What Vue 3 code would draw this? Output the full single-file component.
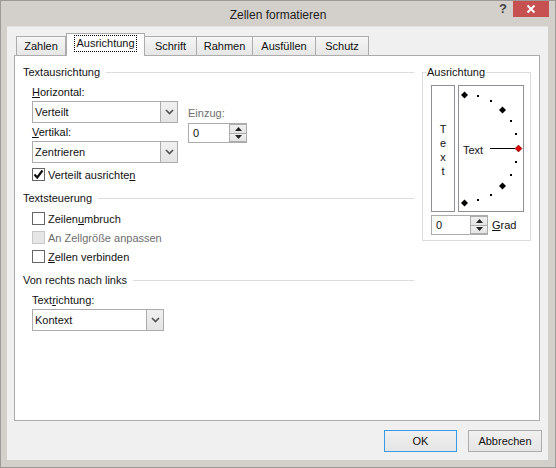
<script setup>
const tabs = [
  { name: 'Zahlen', w: 50 },
  { name: 'Ausrichtung', w: 79, active: true },
  { name: 'Schrift', w: 52 },
  { name: 'Rahmen', w: 56 },
  { name: 'Ausfüllen', w: 63 },
  { name: 'Schutz', w: 53 },
]
const big = [[464.5, 95], [502.5, 110], [502.5, 186], [464.5, 203]]
const small = [[478, 96], [491, 101], [511, 121], [516, 134], [516, 162], [511, 175], [491, 195], [478, 200]]
const diamond = (x, y, r = 3.5) => `${x},${y - r} ${x + r},${y} ${x},${y + r} ${x - r},${y}`
</script>

<template>
  <div class="window">
    <header class="titlebar">
      <span class="title">Zellen formatieren</span>
      <span class="help">?</span>
      <span class="close">
        <svg width="10" height="10" viewBox="0 0 10 10"><path d="M1.5 1.5 8.5 8.5M8.5 1.5 1.5 8.5" stroke="#fff" stroke-width="2" /></svg>
      </span>
    </header>

    <div class="client">
      <div class="tabs">
        <div
          v-for="t in tabs"
          :key="t.name"
          class="tab"
          :class="{ active: t.active }"
          :style="{ width: t.w + 'px' }"
        >
          <span :class="{ focus: t.active }">{{ t.name }}</span>
        </div>
      </div>

      <section class="panel">
        <div class="left">
          <div class="head"><span>Textausrichtung</span><i></i></div>
          <div class="align-grid">
            <div class="stack">
              <div class="label first"><u>H</u>orizontal:</div>
              <div class="select">
                <span>Verteilt</span>
                <b class="arrow"><svg width="9" height="6" viewBox="0 0 9 6"><path d="M1 1 4.5 4.5 8 1" fill="none" stroke="#555" stroke-width="1.7" /></svg></b>
              </div>
              <div class="label"><u>V</u>ertikal:</div>
              <div class="select">
                <span>Zentrieren</span>
                <b class="arrow"><svg width="9" height="6" viewBox="0 0 9 6"><path d="M1 1 4.5 4.5 8 1" fill="none" stroke="#555" stroke-width="1.7" /></svg></b>
              </div>
            </div>
            <div class="indent">
              <div class="label muted">Einzug:</div>
              <div class="spin">
                <span>0</span>
                <div class="spin-btns">
                  <b><svg width="7" height="4" viewBox="0 0 7 4"><path d="M3.5 0 7 4H0z" fill="#222" /></svg></b>
                  <b><svg width="7" height="4" viewBox="0 0 7 4"><path d="M0 0H7L3.5 4z" fill="#222" /></svg></b>
                </div>
              </div>
            </div>
          </div>
          <div class="check top-check">
            <span class="box">
              <svg width="11" height="11" viewBox="0 0 11 11"><path d="M1.5 5.5 4.2 8.5 9.5 1.5" fill="none" stroke="#111" stroke-width="2.2" /></svg>
            </span>
            <span>Verteilt ausrichte<u>n</u></span>
          </div>

          <div class="head second"><span>Textsteuerung</span><i></i></div>
          <div class="check-list">
            <div class="check"><span class="box"></span><span>Zeilen<u>u</u>mbruch</span></div>
            <div class="check disabled"><span class="box"></span><span>An Zellgröße anpassen</span></div>
            <div class="check"><span class="box"></span><span><u>Z</u>ellen verbinden</span></div>
          </div>

          <div class="head third"><span>Von rechts nach links</span><i></i></div>
          <div class="label first">Text<u>r</u>ichtung:</div>
          <div class="select narrow">
            <span>Kontext</span>
            <b class="arrow"><svg width="9" height="6" viewBox="0 0 9 6"><path d="M1 1 4.5 4.5 8 1" fill="none" stroke="#555" stroke-width="1.7" /></svg></b>
          </div>
        </div>

        <fieldset class="orient">
          <legend>Ausrichtung</legend>
          <div class="dials">
            <div class="vertical"><span>T</span><span>e</span><span>x</span><span>t</span></div>
            <svg class="dial" width="66" height="127" viewBox="458 85 66 127">
              <rect x="458.5" y="85.5" width="65" height="126" fill="#fff" stroke="#8e8f98" />
              <text x="463" y="154" class="dial-text">Text</text>
              <line x1="490" y1="148.5" x2="515" y2="148.5" stroke="#000" />
              <polygon v-for="(p, i) in big" :key="'b' + i" :points="diamond(p[0], p[1])" fill="#000" />
              <rect v-for="(p, i) in small" :key="'s' + i" :x="p[0] - 1" :y="p[1] - 1" width="2" height="2" fill="#000" />
              <polygon :points="diamond(518.5, 148.5)" fill="#e00000" stroke="#500" stroke-width="0.5" />
            </svg>
          </div>
          <div class="degree">
            <div class="spin">
              <span>0</span>
              <div class="spin-btns">
                <b><svg width="7" height="4" viewBox="0 0 7 4"><path d="M3.5 0 7 4H0z" fill="#222" /></svg></b>
                <b><svg width="7" height="4" viewBox="0 0 7 4"><path d="M0 0H7L3.5 4z" fill="#222" /></svg></b>
              </div>
            </div>
            <span><u>G</u>rad</span>
          </div>
        </fieldset>
      </section>

      <footer class="footer">
        <button class="btn default">OK</button>
        <button class="btn cancel">Abbrechen</button>
      </footer>
    </div>
  </div>
</template>

<style>
html, body { margin: 0; padding: 0; background: #d4d0cc; }
</style>

<style scoped>
.window {
  box-sizing: border-box;
  width: 556px;
  height: 468px;
  background: #d3cfcb;
  border: 1px solid #9c9a97;
  font: 11px/14px "Liberation Sans", Arial, sans-serif;
  color: #111;
  display: flex;
  flex-direction: column;
  overflow: hidden;
}
.titlebar {
  height: 25px;
  flex: none;
  display: flex;
  align-items: flex-start;
  position: relative;
}
.title {
  position: absolute;
  left: 0;
  right: 0;
  top: 6px;
  text-align: center;
  font-size: 12px;
  line-height: 16px;
  color: #222;
}
.help {
  position: absolute;
  left: 498px;
  top: 0;
  font: bold 13px/15px "Liberation Sans", sans-serif;
  color: #444;
}
.close {
  position: absolute;
  left: 512px;
  top: 0;
  width: 36px;
  height: 16px;
  background: #c75050;
  display: flex;
  align-items: center;
  justify-content: center;
}
.client {
  width: 541px;
  height: 434px;
  margin-left: 6px;
  box-sizing: border-box;
  background: #f0f0f0;
  padding: 7px 7px 0 7px;
  border-top: 1px solid #e4e2e0;
  display: flex;
  flex-direction: column;
}
.tabs {
  display: flex;
  align-items: flex-end;
  height: 21px;
  padding-left: 2px;
  position: relative;
  z-index: 1;
}
.tab {
  box-sizing: border-box;
  height: 19px;
  background: linear-gradient(#f6f6f6, #e6e6e6);
  border: 1px solid #acacac;
  border-bottom: none;
  border-left: none;
  display: flex;
  align-items: center;
  justify-content: center;
}
.tab:first-child { border-left: 1px solid #acacac; }
.tab.active {
  height: 23px;
  margin-bottom: -1px;
  background: #fff;
  border-left: 1px solid #acacac;
  padding-bottom: 3px;
}
.focus { outline: 1px dotted #000; padding: 0 1px; line-height: 15px; }
.panel {
  box-sizing: border-box;
  width: 526px;
  height: 366px;
  background: #fff;
  border: 1px solid #acacac;
  display: flex;
  padding: 9px 0 0 8px;
}
.left { width: 391px; }
.head {
  display: flex;
  align-items: center;
  gap: 6px;
  height: 14px;
}
.head i { flex: 1; height: 1px; background: #dcdcdc; }
.head.second { margin-top: 7px; }
.head.third { margin-top: 7px; }
.label { margin: 2px 0 2px 9px; height: 14px; }
.label.first { margin-top: 6px; }
.muted { color: #6d6d6d; margin: 0 0 3px; }
.align-grid { display: flex; margin-left: 0; }
.stack { width: 155px; }
.indent { margin-left: 10px; padding-top: 27px; }
.select {
  box-sizing: border-box;
  width: 146px;
  height: 22px;
  margin-left: 9px;
  background: #fff;
  border: 1px solid #acacac;
  display: flex;
  align-items: center;
  justify-content: space-between;
  padding-left: 2px;
}
.select.narrow { width: 132px; }
.arrow {
  width: 17px;
  height: 20px;
  box-sizing: border-box;
  background: linear-gradient(#f0f0f0, #e4e4e4);
  border-left: 1px solid #acacac;
  display: flex;
  align-items: center;
  justify-content: center;
}
.spin {
  box-sizing: border-box;
  width: 59px;
  height: 20px;
  background: #fff;
  border: 1px solid #acacac;
  display: flex;
  align-items: center;
  justify-content: space-between;
  padding-left: 4px;
}
.spin-btns { display: flex; flex-direction: column; width: 17px; height: 18px; gap: 0; }
.spin-btns b {
  flex: 1;
  display: flex;
  align-items: center;
  justify-content: center;
  background: linear-gradient(#f0f0f0, #e4e4e4);
  border: 1px solid #acacac;
  border-right: none;
  box-sizing: border-box;
}
.spin-btns b + b { border-top: none; }
.check {
  display: flex;
  align-items: center;
  gap: 3px;
  height: 19px;
  margin-left: 9px;
}
.top-check { margin-top: 2px; }
.box {
  box-sizing: border-box;
  width: 13px;
  height: 13px;
  flex: none;
  background: #fff;
  border: 1px solid #666;
  display: flex;
  align-items: center;
  justify-content: center;
}
.check-list { margin-top: 4px; }
.disabled { color: #6d6d6d; }
.disabled .box { background: #e6e6e6; border-color: #c8c8c8; }
.orient {
  box-sizing: border-box;
  width: 109px;
  height: 176px;
  margin: 0 0 0 8px;
  padding: 6px 7px 0 8px;
  border: 1px solid #dcdcdc;
  min-width: 0;
}
.orient legend { padding: 0 1px; margin-left: -5px; line-height: 14px; }
.dials { display: flex; gap: 3px; }
.vertical {
  box-sizing: border-box;
  width: 24px;
  height: 127px;
  padding-top: 2px;
  border: 1px solid #8e8f98;
  display: flex;
  flex-direction: column;
  align-items: center;
  justify-content: center;
  line-height: 14px;
  flex: none;
}
.dial { display: block; flex: none; }
.dial-text { font: 11px "Liberation Sans", sans-serif; fill: #111; }
.degree { display: flex; align-items: center; gap: 4px; margin-top: 3px; }
.degree .spin { width: 57px; }
.footer {
  display: flex;
  justify-content: flex-end;
  gap: 11px;
  margin-top: 9px;
  margin-right: -1px;
}
.btn {
  box-sizing: border-box;
  height: 22px;
  padding: 0;
  font: inherit;
  color: #111;
  background: linear-gradient(#f0f0f0, #e5e5e5);
  border: 1px solid #acacac;
}
.btn.default { width: 73px; border-color: #3c9ae6; }
.btn.cancel { width: 74px; }
</style>
